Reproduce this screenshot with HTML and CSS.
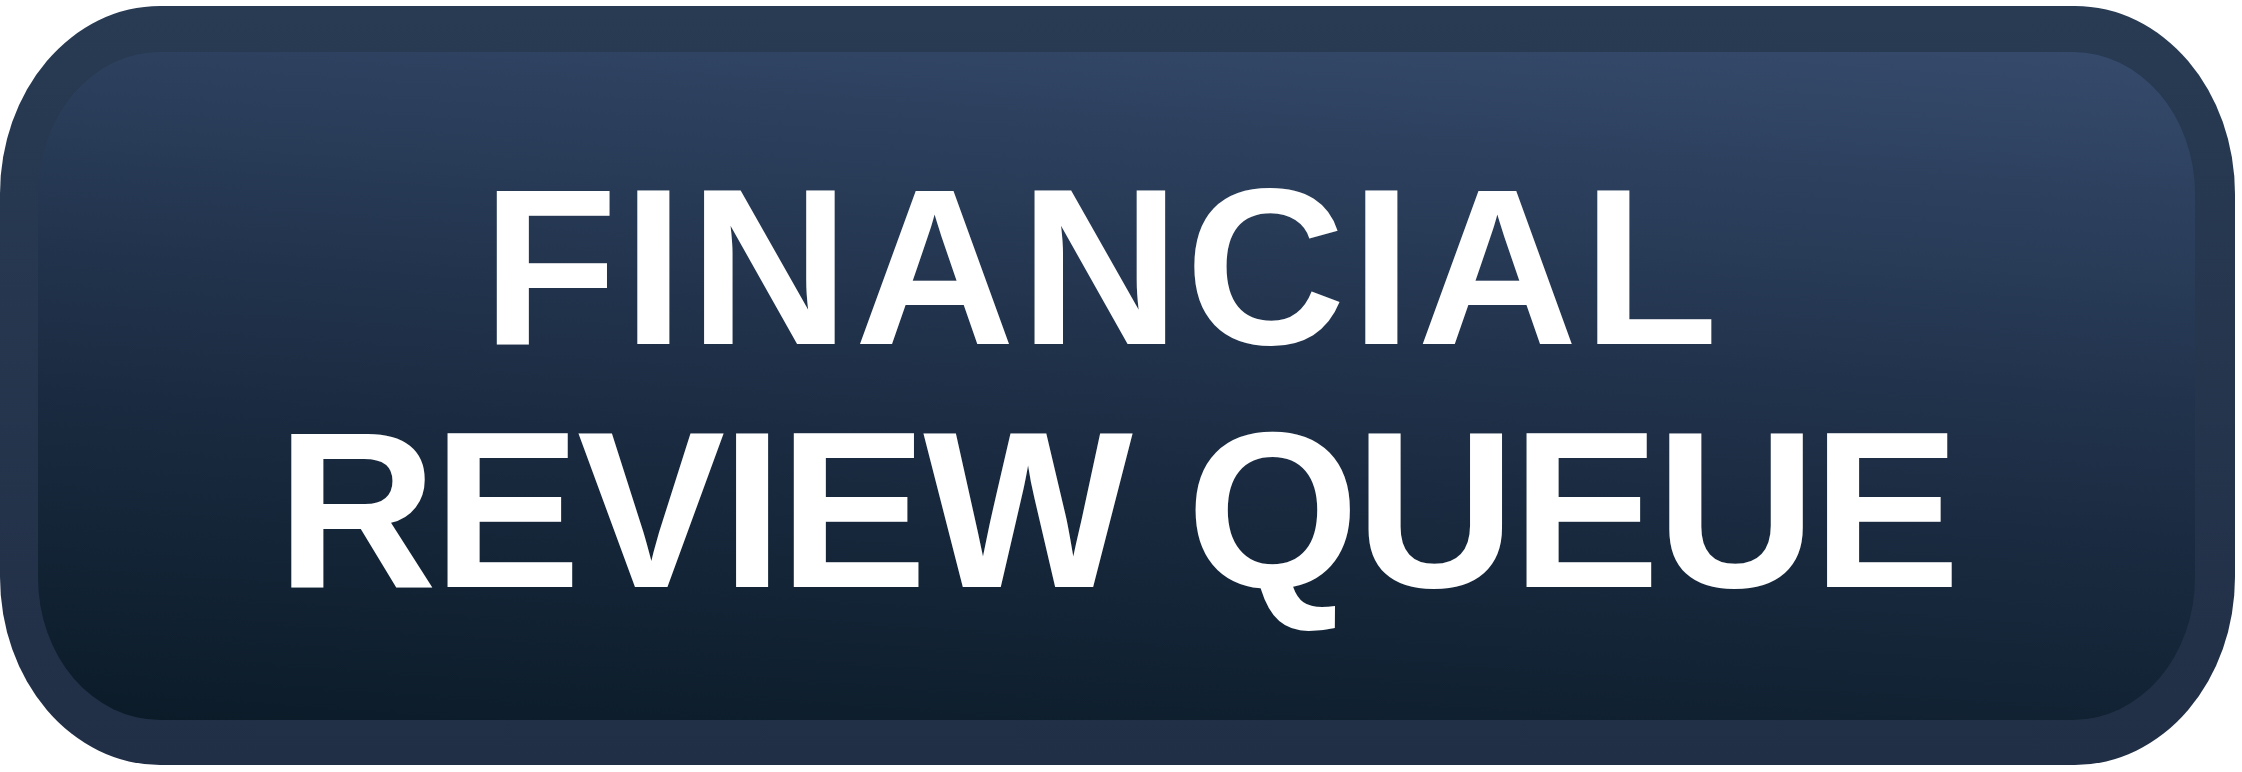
FILE: index.html
```html
<!DOCTYPE html>
<html lang="en">
<head>
  <meta charset="UTF-8">
  <meta name="viewport" content="width=device-width, initial-scale=1.0">
  <title>Financial Review Queue</title>
  <link rel="stylesheet" href="styles.css">
</head>
<body>

  <div class="queue-button">
    <div class="queue-face">
      <h1 class="queue-label">
        <span class="line line-top">FINANCIAL</span>
        <span class="line line-bottom">REVIEW QUEUE</span>
      </h1>
    </div>
  </div>

</body>
</html>
```

FILE: styles.css
```css
body {
  margin: 0;
  background-color: #ffffff;
  font-family: 'Liberation Sans', Arial, sans-serif;
}

/* outer rim of the button */
.queue-button {
  box-sizing: border-box;
  width: 2235px;
  height: 759px;
  margin-top: 6px;
  padding: 46px 40px 45px 38px;
  border-radius: 160px / 188px;
  background: linear-gradient(to bottom, #283b53, #212f46);
}

/* inner face, lighter toward the top right */
.queue-face {
  height: 100%;
  border-radius: 122px / 142px;
  background: linear-gradient(184deg, #364a6c 0%, #283b57 28%, #1e2f47 50%, #142538 75%, #0b1b28 100%);
  display: flex;
  align-items: center;
  justify-content: center;
}

.queue-label {
  margin: 6px 0 0;
  color: #ffffff;
  font-size: 222px;
  font-weight: bold;
  line-height: 243px;
  text-align: center;
}

.line {
  display: block;
}

.line-top {
  letter-spacing: 5px;
  margin-left: -28px;
}

.line-bottom {
  letter-spacing: -3.9px;
}
```
